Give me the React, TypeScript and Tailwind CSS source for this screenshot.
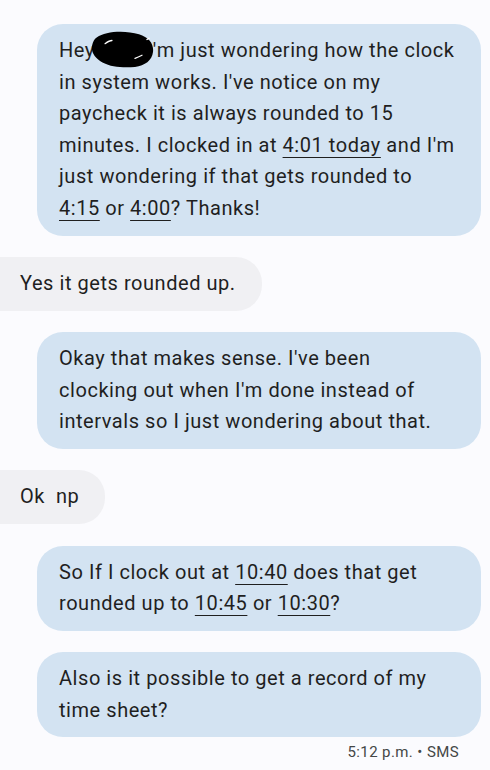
import React from "react";

const U = ({ children }: { children: React.ReactNode }) => (
  <span className="underline decoration-1 underline-offset-[5px]">{children}</span>
);

function Blob() {
  return (
    <span className="relative inline-block w-[58px] align-baseline">
      <svg
        width="64"
        height="38"
        viewBox="0 0 64 36"
        preserveAspectRatio="none"
        className="absolute left-[-4px] top-[-26px]"
      >
        <path
          d="M6 6 C14 0 34 -1 48 3 C58 6 63 12 62 20 C61 28 54 33 44 34 C32 35 20 34 12 30 C4 26 0 20 1 14 C2 10 3 8 6 6 Z"
          fill="#000"
        />
        <path d="M14 12 C17 10 19 9 21 9" stroke="#fff" strokeWidth="1.2" fill="none" strokeLinecap="round" />
        <path d="M44 26 C47 25 49 24 51 23" stroke="#fff" strokeWidth="1.2" fill="none" strokeLinecap="round" />
        <path d="M56 8 L58 7" stroke="#fff" strokeWidth="1.4" fill="none" strokeLinecap="round" />
      </svg>
    </span>
  );
}

function Sent({ children }: { children: React.ReactNode }) {
  return (
    <div className="ml-[37px] w-[444px] rounded-[26px] bg-[#d3e3f2] px-[22px] py-[11px] text-[20px] leading-[31.6px] tracking-[0.55px] text-[#1f1f1f]">
      {children}
    </div>
  );
}

function Received({ children }: { children: React.ReactNode }) {
  return (
    <div className="self-start rounded-r-[26px] bg-[#f0f0f3] py-[11px] pl-[20px] pr-[26px] text-[20px] leading-[31.6px] tracking-[0.55px] text-[#1f1f1f]">
      {children}
    </div>
  );
}

export default function App() {
  return (
    <div
      className="flex h-[770px] w-[490px] flex-col gap-[21.5px] bg-[#fbfbfe] pt-[24px]"
      style={{ fontFamily: "Roboto, 'Noto Sans', sans-serif" }}
    >
      <Sent>
        Hey<Blob />'m just wondering how the clock
        <br />
        in system works. I've notice on my
        <br />
        paycheck it is always rounded to 15
        <br />
        minutes. I clocked in at <U>4:01 today</U> and I'm
        <br />
        just wondering if that gets rounded to
        <br />
        <U>4:15</U> or <U>4:00</U>? Thanks!
      </Sent>
      <Received>Yes it gets rounded up.</Received>
      <Sent>
        Okay that makes sense. I've been
        <br />
        clocking out when I'm done instead of
        <br />
        intervals so I just wondering about that.
      </Sent>
      <Received>Ok&nbsp; np</Received>
      <Sent>
        So If I clock out at <U>10:40</U> does that get
        <br />
        rounded up to <U>10:45</U> or <U>10:30</U>?
      </Sent>
      <div className="flex flex-col gap-[5px]">
        <Sent>
          Also is it possible to get a record of my
          <br />
          time sheet?
        </Sent>
        <div className="pr-[31px] text-right text-[15px] leading-[20px] tracking-[0.4px] text-[#444746]">
          5:12 p.m. • SMS
        </div>
      </div>
    </div>
  );
}
